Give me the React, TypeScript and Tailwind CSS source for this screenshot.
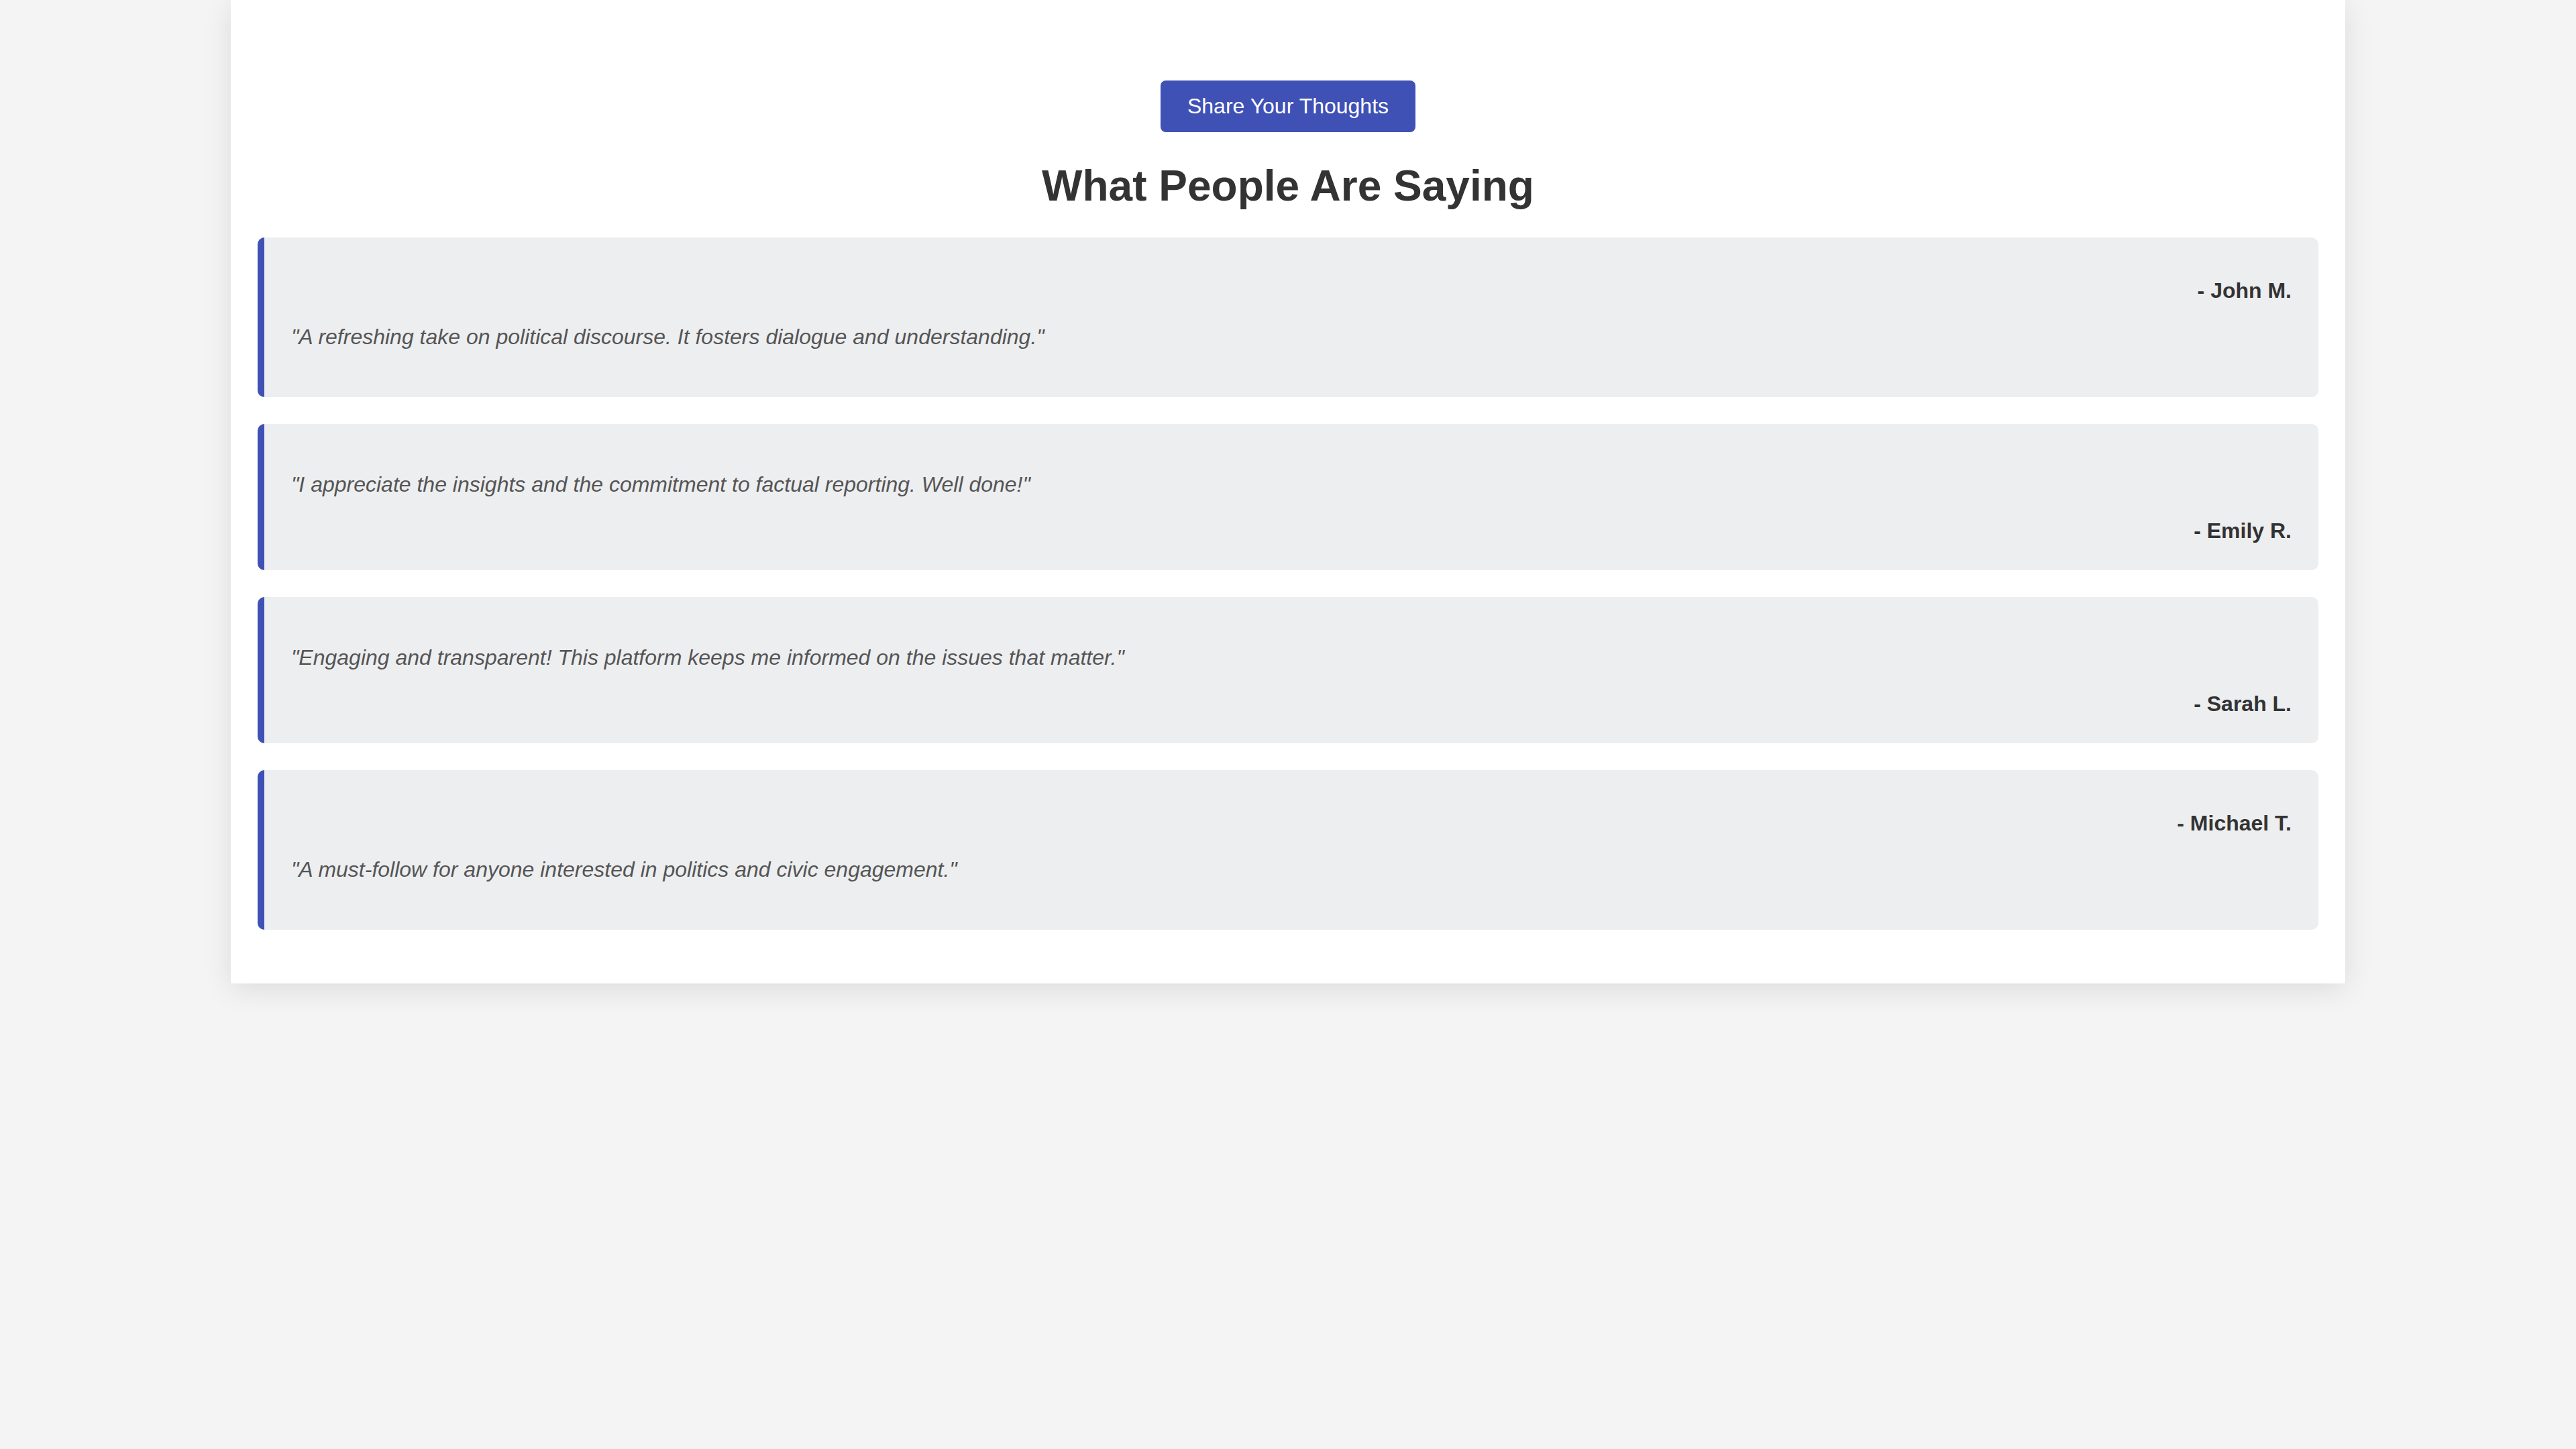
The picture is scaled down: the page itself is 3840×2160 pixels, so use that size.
const testimonials = [
  { quote: "A refreshing take on political discourse. It fosters dialogue and understanding.", author: "John M.", authorFirst: true },
  { quote: "I appreciate the insights and the commitment to factual reporting. Well done!", author: "Emily R.", authorFirst: false },
  { quote: "Engaging and transparent! This platform keeps me informed on the issues that matter.", author: "Sarah L.", authorFirst: false },
  { quote: "A must-follow for anyone interested in politics and civic engagement.", author: "Michael T.", authorFirst: true },
];

const Testimonial = ({ quote, author, authorFirst }: { quote: string; author: string; authorFirst: boolean }) => {
  const quoteEl = <p className="my-[20px] text-[32px] leading-[60px] italic text-[#555]">"{quote}"</p>;
  const authorEl = <div className="mt-[20px] text-right text-[32px] leading-[38px] font-bold text-[#333]">- {author}</div>;
  return (
    <div className="rounded-[10px] border-l-[10px] border-[#3f51b5] bg-[#edeef0] px-[40px] py-[40px]">
      {authorFirst ? (
        <>
          {authorEl}
          {quoteEl}
        </>
      ) : (
        <>
          {quoteEl}
          {authorEl}
        </>
      )}
    </div>
  );
};

export default function App() {
  return (
    <div className="min-h-screen bg-[#f4f4f4] font-['Liberation_Sans',Arial,sans-serif] text-[#333]">
      <div className="mx-auto w-[3152px] bg-white px-[40px] pt-[120px] pb-[80px] shadow-[0_8px_40px_rgba(0,0,0,0.1)]">
        <div className="flex justify-center">
          <button className="rounded-[8px] bg-[#3f51b5] px-[40px] py-[20px] text-[32px] leading-[37px] text-white">
            Share Your Thoughts
          </button>
        </div>
        <h2 className="mt-[43px] mb-[40px] text-center text-[64px] leading-[74px] font-bold text-[#333]">What People Are Saying</h2>
        <div className="flex flex-col gap-[40px]">
          {testimonials.map((t) => (
            <Testimonial key={t.author} {...t} />
          ))}
        </div>
      </div>
    </div>
  );
}
